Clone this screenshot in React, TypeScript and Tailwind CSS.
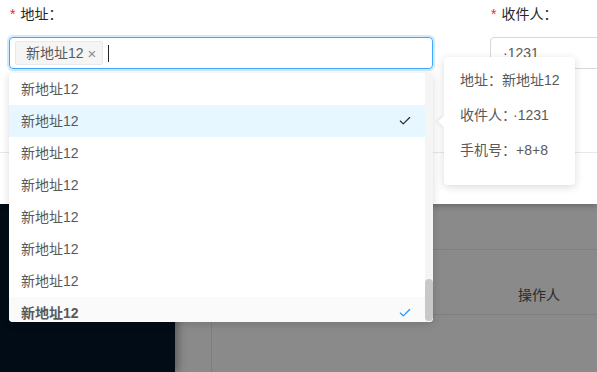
import { Check } from "lucide-react";

const items = Array.from({ length: 8 }, (_, i) => i);

export default function App() {
  return (
    <div className="relative w-[597px] h-[372px] overflow-hidden bg-white font-['Liberation_Sans','Noto_Sans_CJK_SC',sans-serif] text-[14px]">
      {/* modal body */}
      <div className="relative z-10 h-[204px] bg-white shadow-[0_2px_6px_rgba(0,0,0,0.25)]">
        <div className="h-[152px] flex">
          <div className="ml-[9px] w-[424px] shrink-0">
            <div className="mt-[3px] h-[22px] leading-[22px] pl-[1px] text-[#262626]">
              <span className="text-[#f5222d] mr-[5px]">*</span>地址：
            </div>
            <div className="mt-[12px] h-[32px] rounded-[4px] border border-[#40a9ff] shadow-[0_0_0_2px_rgba(24,144,255,0.2)] flex items-center pl-[5px]">
              <div className="h-[24px] flex items-center rounded-[2px] border border-[#e8e8e8] bg-[#f5f5f5] pl-[10px] pr-[6px] text-[#595959]">
                <span className="leading-[22px]">新地址12</span>
                <span className="ml-[4px] text-[15px] leading-none text-[#8c8c8c]">×</span>
              </div>
              <div className="ml-[5px] w-px h-[17px] bg-[#262626]" />
            </div>
          </div>
          <div className="ml-[57px] flex-1">
            <div className="mt-[3px] h-[22px] leading-[22px] pl-[1px] text-[#262626]">
              <span className="text-[#f5222d] mr-[5px]">*</span>收件人：
            </div>
            <div className="mt-[12px] h-[32px] w-[200px] rounded-[4px] border border-[#d9d9d9] flex items-center pl-[12px] text-[#595959]">
              ·1231
            </div>
          </div>
        </div>
        <div className="h-[52px] border-t border-[#e8e8e8]" />
      </div>

      {/* masked page below */}
      <div className="flex h-[168px]">
        <div className="w-[175px] shrink-0 bg-[#010c17] relative z-[1] shadow-[3px_0_8px_rgba(0,0,0,0.35)]" />
        <div className="flex-1 bg-[#8a8a8a] flex">
          <div className="w-[36px] shrink-0" />
          <div className="flex-1 border-l border-[#7e7e7e]">
            <div className="h-[46px] border-b border-[#7e7e7e]" />
            <div className="h-[65px] border-b border-[#7e7e7e] flex items-end pb-[8px]">
              <div className="w-[306px] shrink-0" />
              <span className="text-[#2a2a2a] leading-[22px]">操作人</span>
            </div>
          </div>
        </div>
      </div>

      {/* select dropdown */}
      <div className="absolute z-20 left-[9px] top-[73px] w-[424px] h-[249px] bg-white rounded-[4px] shadow-[0_2px_8px_rgba(0,0,0,0.15)] overflow-hidden flex">
        <div className="flex-1 flex flex-col">
          {items.map((i) => {
            const selected = i === 1;
            const last = i === 7;
            return (
              <div
                key={i}
                className={
                  "h-[32px] shrink-0 flex items-center justify-between pl-[12px] pr-[13px] text-[#595959] " +
                  (selected ? "bg-[#e6f7ff]" : last ? "bg-[#fafafa] font-semibold" : "")
                }
              >
                <span>新地址12</span>
                {selected && <Check size={14} strokeWidth={2} className="text-[#262626]" />}
                {last && <Check size={14} strokeWidth={2} className="text-[#1890ff]" />}
              </div>
            );
          })}
        </div>
        <div className="w-[8px] bg-[#f5f5f5] flex flex-col justify-end pb-[1px]">
          <div className="h-[42px] rounded-[4px] bg-[#c8c8c8]" />
        </div>
      </div>

      {/* popover */}
      <div className="absolute z-20 left-[444px] top-[57px] w-[131px] h-[128px] bg-white rounded-[4px] shadow-[0_2px_8px_rgba(0,0,0,0.15)]">
        <div className="absolute left-[-4px] top-[60px] w-[9px] h-[9px] rotate-45 bg-white shadow-[-2px_2px_3px_rgba(0,0,0,0.06)]" />
        <div className="relative flex flex-col gap-[13px] pt-[12px] pl-[16px] text-[#595959] leading-[22px] whitespace-nowrap">
          <div>地址：新地址12</div>
          <div>收件人：<span className="ml-[4px]">·1231</span></div>
          <div>手机号：+8+8</div>
        </div>
      </div>
    </div>
  );
}
